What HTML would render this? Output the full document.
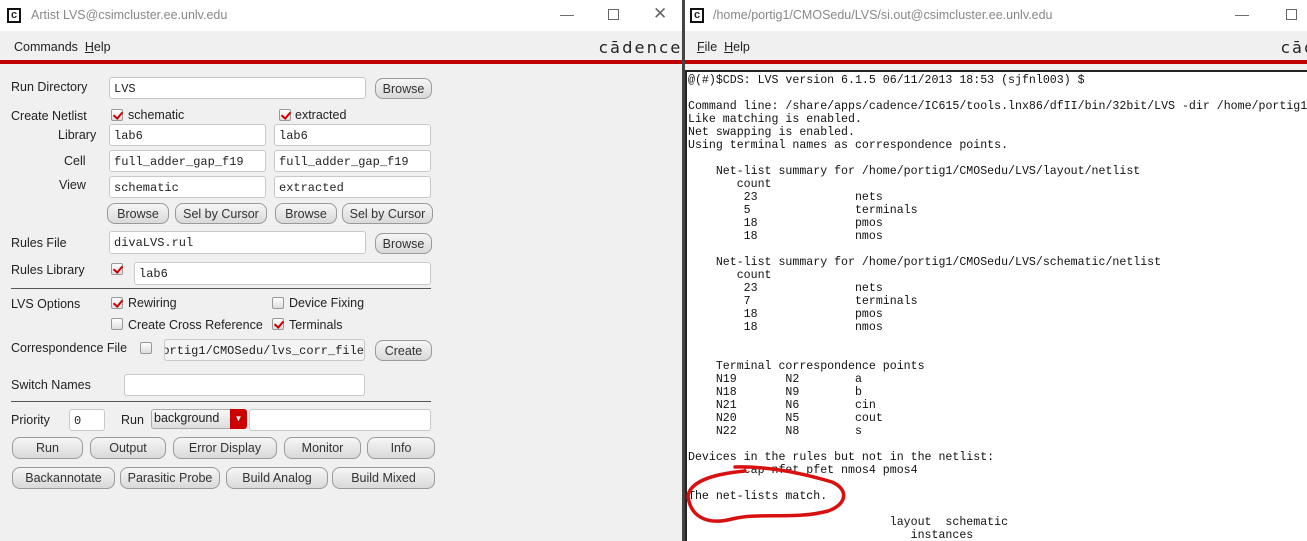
<!DOCTYPE html>
<html><head><meta charset="utf-8"><style>
*{margin:0;padding:0;box-sizing:border-box}
html,body{width:1307px;height:541px;overflow:hidden}
body{background:#f0f0f0;font-family:"Liberation Sans",sans-serif;font-size:12.5px;color:#222;position:relative}
.a{position:absolute;white-space:nowrap}
.inp{position:absolute;background:#fff;border:1px solid #c8c8c8;border-radius:3px;font-family:"Liberation Mono",monospace;font-size:12px;padding:4px 0 0 4px;color:#222;overflow:hidden}
.btn{position:absolute;border:1px solid #9a9a9a;border-radius:8px;background:linear-gradient(#f6f6f6,#d9d9d9);text-align:center;font-size:12.5px;color:#333;line-height:21px}
.cb{position:absolute;width:12px;height:12px;border:1px solid #999;background:linear-gradient(#fff,#ddd);border-radius:2px}
.cb.on::after{content:"";position:absolute;left:3px;top:0px;width:4px;height:7px;border:solid #c00;border-width:0 2.5px 2.5px 0;transform:rotate(40deg)}
.lbl{position:absolute;white-space:nowrap;font-size:12.5px;color:#222}
.t{position:absolute;left:688px;font-family:"Liberation Mono",monospace;font-size:11.6px;line-height:13px;color:#111;white-space:pre}
</style></head><body>
<!-- left window -->
<div class="a" style="left:0;top:0;width:682px;height:31px;background:#fff"></div>
<div class="a" style="left:7px;top:8px;width:14px;height:15px;border:2px solid #111;background:#fff;font:bold 11px 'Liberation Sans';text-align:center;line-height:11px">c</div>
<div class="a" style="left:31px;top:8px;color:#888;font-size:12.5px">Artist LVS@csimcluster.ee.unlv.edu</div>
<div class="a" style="left:560px;top:6px;color:#666;font-size:14px">—</div>
<div class="a" style="left:608px;top:9px;width:11px;height:11px;border:1px solid #666"></div>
<div class="a" style="left:653px;top:4px;color:#666;font-size:17px">✕</div>
<div class="a" style="left:14px;top:40px;font-size:12.5px">Commands&nbsp;&nbsp;<u>H</u>elp</div>
<div class="a" style="left:599px;top:38px;font-size:16px;letter-spacing:2.3px;color:#222;font-family:'DejaVu Sans',sans-serif">cādence</div>
<div class="a" style="left:0;top:60px;width:682px;height:4px;background:#c00000"></div>
<div class="a" style="left:682px;top:0;width:3px;height:541px;background:#444"></div>

<div class="lbl" style="left:11px;top:80px">Run Directory</div>
<div class="inp" style="left:109px;top:77px;width:257px;height:22px">LVS</div>
<div class="btn" style="left:375px;top:78px;width:57px;height:21px">Browse</div>

<div class="lbl" style="left:11px;top:109px">Create Netlist</div>
<div class="cb on" style="left:111px;top:109px"></div><div class="lbl" style="left:128px;top:108px">schematic</div>
<div class="cb on" style="left:279px;top:109px"></div><div class="lbl" style="left:295px;top:108px">extracted</div>

<div class="lbl" style="left:58px;top:128px">Library</div>
<div class="inp" style="left:109px;top:124px;width:157px;height:22px">lab6</div>
<div class="inp" style="left:274px;top:124px;width:157px;height:22px">lab6</div>
<div class="lbl" style="left:64px;top:154px">Cell</div>
<div class="inp" style="left:109px;top:150px;width:157px;height:22px">full_adder_gap_f19</div>
<div class="inp" style="left:274px;top:150px;width:157px;height:22px">full_adder_gap_f19</div>
<div class="lbl" style="left:59px;top:178px">View</div>
<div class="inp" style="left:109px;top:176px;width:157px;height:22px">schematic</div>
<div class="inp" style="left:274px;top:176px;width:157px;height:22px">extracted</div>
<div class="btn" style="left:107px;top:203px;width:62px;height:21px">Browse</div>
<div class="btn" style="left:175px;top:203px;width:92px;height:21px">Sel by Cursor</div>
<div class="btn" style="left:275px;top:203px;width:62px;height:21px">Browse</div>
<div class="btn" style="left:342px;top:203px;width:91px;height:21px">Sel by Cursor</div>

<div class="lbl" style="left:11px;top:236px">Rules File</div>
<div class="inp" style="left:109px;top:231px;width:257px;height:23px">divaLVS.rul</div>
<div class="btn" style="left:375px;top:233px;width:57px;height:21px">Browse</div>
<div class="lbl" style="left:11px;top:263px">Rules Library</div>
<div class="cb on" style="left:111px;top:263px"></div>
<div class="inp" style="left:134px;top:262px;width:297px;height:23px">lab6</div>
<div class="a" style="left:11px;top:288px;width:420px;height:1px;background:#555"></div>

<div class="lbl" style="left:11px;top:297px">LVS Options</div>
<div class="cb on" style="left:111px;top:297px"></div><div class="lbl" style="left:128px;top:296px">Rewiring</div>
<div class="cb" style="left:272px;top:297px"></div><div class="lbl" style="left:289px;top:296px">Device Fixing</div>
<div class="cb" style="left:111px;top:318px"></div><div class="lbl" style="left:128px;top:318px">Create Cross Reference</div>
<div class="cb on" style="left:272px;top:318px"></div><div class="lbl" style="left:289px;top:318px">Terminals</div>

<div class="lbl" style="left:11px;top:341px">Correspondence File</div>
<div class="cb" style="left:140px;top:342px"></div>
<div class="inp" style="left:164px;top:339px;width:201px;height:22px;background:#f4f4f4;direction:rtl;text-align:left"><span style="direction:ltr;unicode-bidi:bidi-override">ortig1/CMOSedu/lvs_corr_file</span></div>
<div class="btn" style="left:375px;top:340px;width:57px;height:21px">Create</div>
<div class="lbl" style="left:11px;top:378px">Switch Names</div>
<div class="inp" style="left:124px;top:374px;width:241px;height:22px"></div>
<div class="a" style="left:11px;top:401px;width:420px;height:1px;background:#555"></div>

<div class="lbl" style="left:11px;top:413px">Priority</div>
<div class="inp" style="left:69px;top:409px;width:36px;height:22px">0</div>
<div class="lbl" style="left:121px;top:413px">Run</div>
<div class="a" style="left:151px;top:409px;width:96px;height:20px;border:1px solid #aaa;border-radius:3px;background:linear-gradient(#f8f8f8,#ddd);padding:1px 0 0 2px">background</div>
<div class="a" style="left:230px;top:409px;width:17px;height:20px;background:#c00;border-radius:0 3px 3px 0;color:#fff;font-size:8px;text-align:center;line-height:20px">▼</div>
<div class="inp" style="left:249px;top:409px;width:182px;height:22px"></div>

<div class="btn" style="left:12px;top:437px;width:71px;height:22px">Run</div>
<div class="btn" style="left:90px;top:437px;width:76px;height:22px">Output</div>
<div class="btn" style="left:173px;top:437px;width:104px;height:22px">Error Display</div>
<div class="btn" style="left:284px;top:437px;width:77px;height:22px">Monitor</div>
<div class="btn" style="left:367px;top:437px;width:68px;height:22px">Info</div>
<div class="btn" style="left:12px;top:467px;width:103px;height:22px">Backannotate</div>
<div class="btn" style="left:120px;top:467px;width:100px;height:22px">Parasitic Probe</div>
<div class="btn" style="left:226px;top:467px;width:102px;height:22px">Build Analog</div>
<div class="btn" style="left:332px;top:467px;width:103px;height:22px">Build Mixed</div>

<!-- right window -->
<div class="a" style="left:685px;top:0;width:622px;height:31px;background:#fff"></div>
<div class="a" style="left:690px;top:8px;width:14px;height:15px;border:2px solid #111;background:#fff;font:bold 11px 'Liberation Sans';text-align:center;line-height:11px">c</div>
<div class="a" style="left:713px;top:8px;color:#888;font-size:12.5px">/home/portig1/CMOSedu/LVS/si.out@csimcluster.ee.unlv.edu</div>
<div class="a" style="left:1235px;top:6px;color:#666;font-size:14px">—</div>
<div class="a" style="left:1286px;top:9px;width:11px;height:11px;border:1px solid #666"></div>
<div class="a" style="left:697px;top:40px;font-size:12.5px"><u>F</u>ile&nbsp;&nbsp;<u>H</u>elp</div>
<div class="a" style="left:1281px;top:38px;font-size:16px;letter-spacing:2.3px;color:#222;font-family:'DejaVu Sans',sans-serif">cād</div>
<div class="a" style="left:685px;top:60px;width:622px;height:4px;background:#c00000"></div>
<div class="a" style="left:685px;top:70px;width:622px;height:471px;background:#fff;border-left:2px solid #222;border-top:2px solid #222"></div>

<div class="t" style="top:74px">@(#)$CDS: LVS version 6.1.5 06/11/2013 18:53 (sjfnl003) $</div>
<div class="t" style="top:100px">Command line: /share/apps/cadence/IC615/tools.lnx86/dfII/bin/32bit/LVS -dir /home/portig1</div>
<div class="t" style="top:113px">Like matching is enabled.</div>
<div class="t" style="top:126px">Net swapping is enabled.</div>
<div class="t" style="top:139px">Using terminal names as correspondence points.</div>
<div class="t" style="top:165px">    Net-list summary for /home/portig1/CMOSedu/LVS/layout/netlist</div>
<div class="t" style="top:178px">       count</div>
<div class="t" style="top:191px">        23              nets</div>
<div class="t" style="top:204px">        5               terminals</div>
<div class="t" style="top:217px">        18              pmos</div>
<div class="t" style="top:230px">        18              nmos</div>
<div class="t" style="top:256px">    Net-list summary for /home/portig1/CMOSedu/LVS/schematic/netlist</div>
<div class="t" style="top:269px">       count</div>
<div class="t" style="top:282px">        23              nets</div>
<div class="t" style="top:295px">        7               terminals</div>
<div class="t" style="top:308px">        18              pmos</div>
<div class="t" style="top:321px">        18              nmos</div>
<div class="t" style="top:360px">    Terminal correspondence points</div>
<div class="t" style="top:373px">    N19       N2        a</div>
<div class="t" style="top:386px">    N18       N9        b</div>
<div class="t" style="top:399px">    N21       N6        cin</div>
<div class="t" style="top:412px">    N20       N5        cout</div>
<div class="t" style="top:425px">    N22       N8        s</div>
<div class="t" style="top:451px">Devices in the rules but not in the netlist:</div>
<div class="t" style="top:464px">        cap nfet pfet nmos4 pmos4</div>
<div class="t" style="top:490px">The net-lists match.</div>
<div class="t" style="top:516px">                             layout  schematic</div>
<div class="t" style="top:529px">                                instances</div>

<svg class="a" style="left:0;top:0" width="1307" height="541"><path d="M735,467 C770,466 805,474 832,482 C850,490 846,505 828,511 C795,520 760,512 732,519 C705,526 690,515 688,496 C690,482 712,474 745,471" fill="none" stroke="#d81010" stroke-width="3.5" stroke-linecap="round"/></svg>
</body></html>
